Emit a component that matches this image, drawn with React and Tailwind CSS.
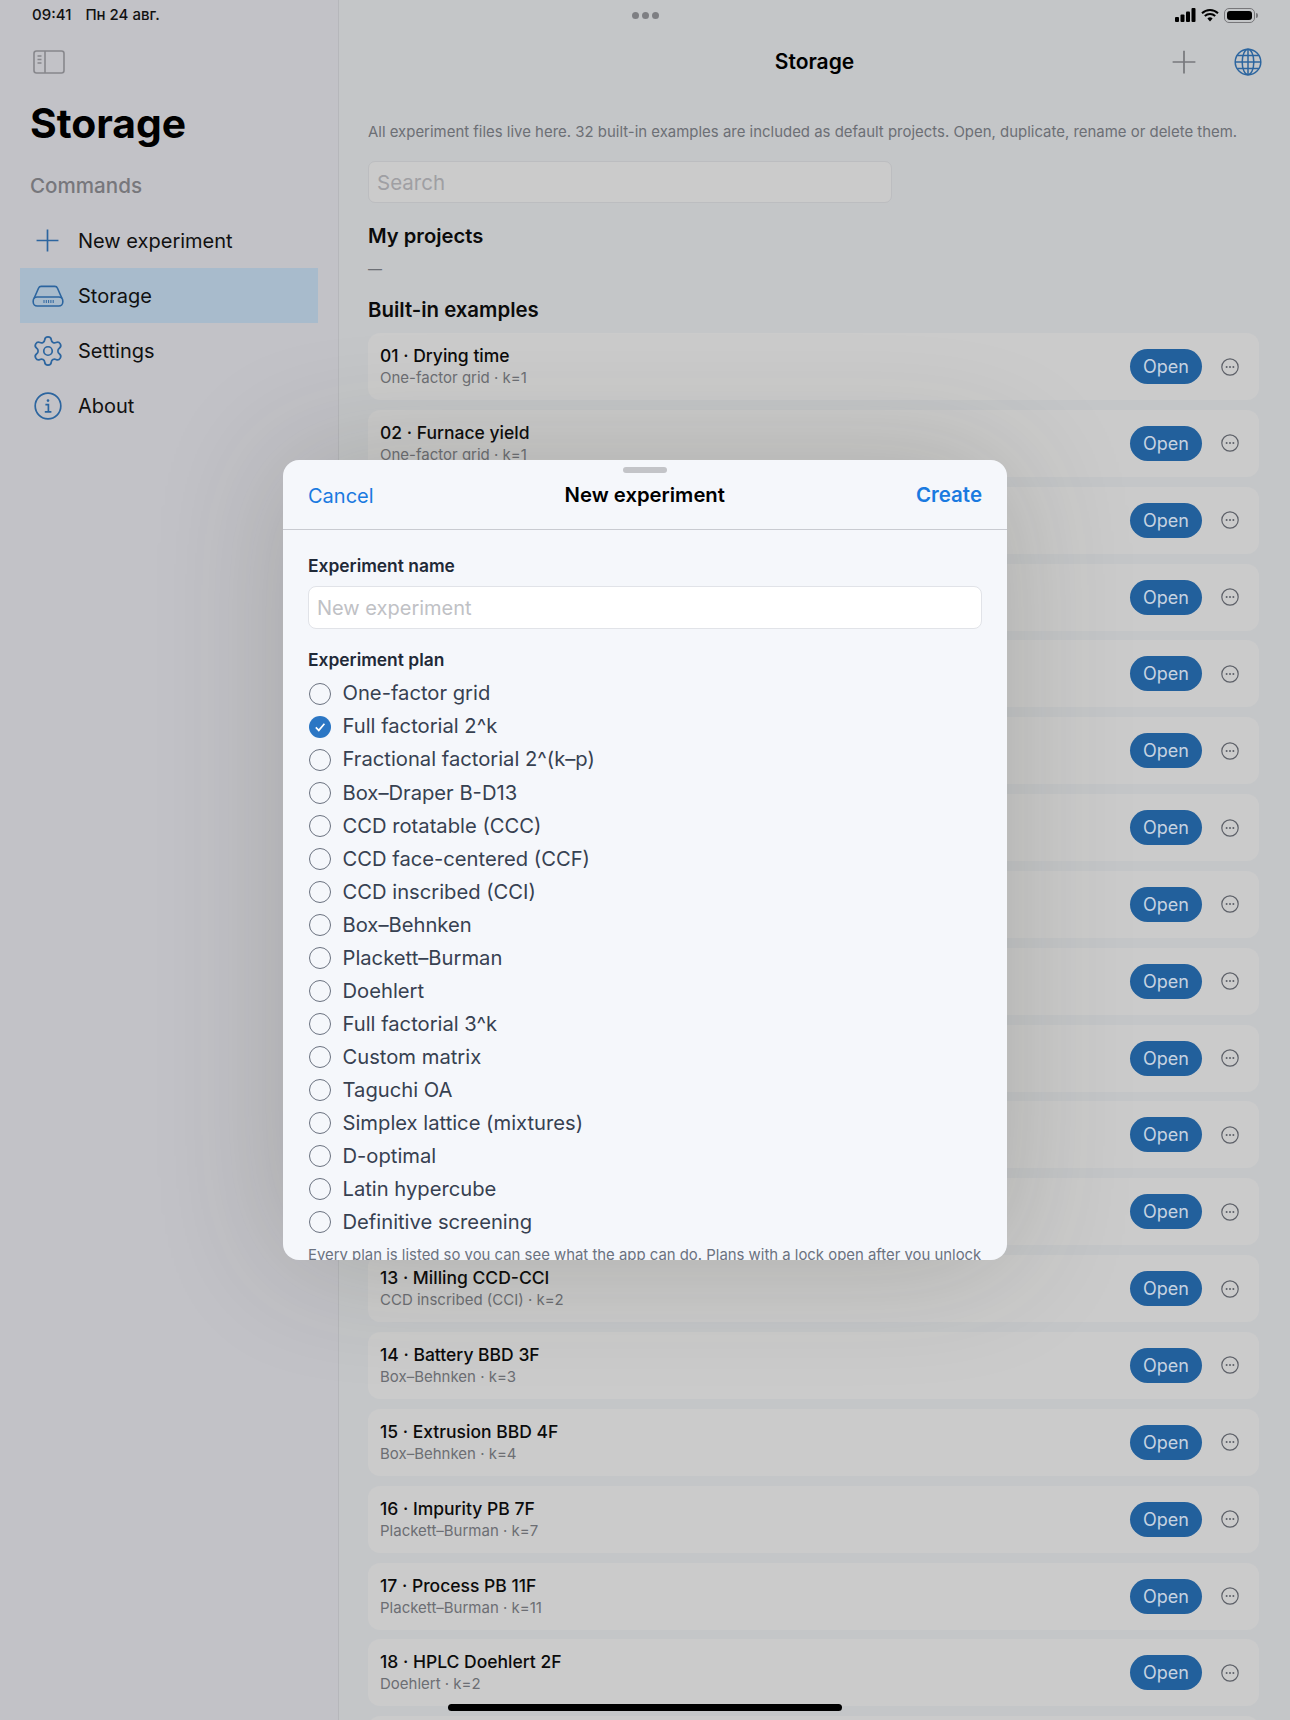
import React from 'react';
import { Settings } from 'lucide-react';

const examples = [
  ['01 · Drying time', 'One-factor grid · k=1'],
  ['02 · Furnace yield', 'One-factor grid · k=1'],
  ['03 · Coating 2F', 'Full factorial 2^k · k=2'],
  ['04 · Catalyst 3F', 'Full factorial 2^k · k=3'],
  ['05 · Extraction 4F', 'Full factorial 2^k · k=4'],
  ['06 · Screening 5F', 'Fractional factorial 2^(k–p) · k=5'],
  ['07 · Screening 6F', 'Fractional factorial 2^(k–p) · k=6'],
  ['08 · Alloy B-D13', 'Box–Draper B-D13 · k=3'],
  ['09 · Reactor CCD', 'CCD rotatable (CCC) · k=2'],
  ['10 · Polymer CCD', 'CCD rotatable (CCC) · k=3'],
  ['11 · Mixing CCF', 'CCD face-centered (CCF) · k=2'],
  ['12 · Drying CCF', 'CCD face-centered (CCF) · k=3'],
  ['13 · Milling CCD-CCI', 'CCD inscribed (CCI) · k=2'],
  ['14 · Battery BBD 3F', 'Box–Behnken · k=3'],
  ['15 · Extrusion BBD 4F', 'Box–Behnken · k=4'],
  ['16 · Impurity PB 7F', 'Plackett–Burman · k=7'],
  ['17 · Process PB 11F', 'Plackett–Burman · k=11'],
  ['18 · HPLC Doehlert 2F', 'Doehlert · k=2'],
];

const plans = [
  'One-factor grid',
  'Full factorial 2^k',
  'Fractional factorial 2^(k–p)',
  'Box–Draper B-D13',
  'CCD rotatable (CCC)',
  'CCD face-centered (CCF)',
  'CCD inscribed (CCI)',
  'Box–Behnken',
  'Plackett–Burman',
  'Doehlert',
  'Full factorial 3^k',
  'Custom matrix',
  'Taguchi OA',
  'Simplex lattice (mixtures)',
  'D-optimal',
  'Latin hypercube',
  'Definitive screening',
];

function PlusIcon({ className }) {
  return (
    <svg viewBox="0 0 24 24" className={className} fill="none" stroke="currentColor" strokeWidth="1.6">
      <path d="M12 1.5v21M1.5 12h21" />
    </svg>
  );
}

function DriveIcon() {
  return (
    <svg viewBox="0 0 32 24" className="h-[24px] w-[32px] text-[#2c659f]" fill="none" stroke="currentColor" strokeWidth="1.6">
      <path d="M2 14.5 6.5 4.2C7 3 8 2.4 9.2 2.4h13.6c1.2 0 2.2.6 2.7 1.8L30 14.5" />
      <rect x="1.2" y="13" width="29.6" height="9" rx="4" />
      <path d="M12 16v3M14.3 16v3M16.6 16v3M18.9 16v3M21.2 16v3" strokeWidth="1" />
    </svg>
  );
}

function InfoIcon() {
  return (
    <svg viewBox="0 0 28 28" className="h-[28px] w-[28px] text-[#2c659f]" fill="none" stroke="currentColor" strokeWidth="1.7">
      <circle cx="14" cy="14" r="12.8" />
      <circle cx="14" cy="8.6" r="1.3" fill="currentColor" stroke="none" />
      <path d="M11.4 12.6H14.4V19.6M10.8 19.8h6.6" />
    </svg>
  );
}

function PanelIcon() {
  return (
    <svg viewBox="0 0 32 24" className="h-[24px] w-[32px] text-[#87878c]" fill="none" stroke="currentColor" strokeWidth="1.6">
      <rect x="1" y="1" width="30" height="22" rx="2.5" />
      <path d="M12 1v22" />
      <path d="M4.5 6h4M4.5 9.5h4M4.5 13h4" />
    </svg>
  );
}

function GlobeIcon() {
  return (
    <svg viewBox="0 0 28 28" className="h-[28px] w-[28px] text-[#2c659f]" fill="none" stroke="currentColor" strokeWidth="1.5">
      <circle cx="14" cy="14" r="12.8" />
      <ellipse cx="14" cy="14" rx="5.8" ry="12.8" />
      <path d="M14 1.2v25.6M1.2 14h25.6M3.2 7.6h21.6M3.2 20.4h21.6" />
    </svg>
  );
}

function MoreIcon() {
  return (
    <svg viewBox="0 0 18 18" className="h-[18px] w-[18px] text-[#5d6068]" fill="none" stroke="currentColor" strokeWidth="1.2">
      <circle cx="9" cy="9" r="8.2" />
      <circle cx="5.6" cy="9" r="1" fill="currentColor" stroke="none" />
      <circle cx="9" cy="9" r="1" fill="currentColor" stroke="none" />
      <circle cx="12.4" cy="9" r="1" fill="currentColor" stroke="none" />
    </svg>
  );
}

function StatusIcons() {
  return (
    <div className="flex items-center gap-[5px]">
      <svg viewBox="0 0 21 14" className="h-[14px] w-[21px] fill-black">
        <rect x="0" y="9" width="4" height="5" rx="1" />
        <rect x="5.5" y="6.5" width="4" height="7.5" rx="1" />
        <rect x="11" y="3.5" width="4" height="10.5" rx="1" />
        <rect x="16.5" y="0" width="4" height="14" rx="1" />
      </svg>
      <svg viewBox="0 0 18 14" className="h-[14px] w-[18px]" fill="none" stroke="#000" strokeWidth="2">
        <path d="M1 5.2a11.5 11.5 0 0 1 16 0M3.8 8a7.5 7.5 0 0 1 10.4 0" />
        <path d="M9 13.4 6.4 10.6a3.7 3.7 0 0 1 5.2 0Z" fill="#000" stroke="none" />
      </svg>
      <div className="flex items-center gap-[1px]">
        <div className="h-[15px] w-[31px] rounded-[5px] border border-[#77777a] p-[2px]">
          <div className="h-full w-full rounded-[3px] bg-black" />
        </div>
        <div className="h-[5px] w-[2px] rounded-r-sm bg-[#77777a]" />
      </div>
    </div>
  );
}

function NavRow({ icon, label, active }) {
  return (
    <div className={`flex h-[55px] items-center ${active ? 'bg-[#a8bbcc]' : ''}`}>
      <div className="flex w-[58px] shrink-0 justify-center pr-[3px]">{icon}</div>
      <span className="text-[20px] text-[#111]">{label}</span>
    </div>
  );
}

function ExampleCard({ title, subtitle }) {
  return (
    <div className="flex h-[67px] shrink-0 items-center rounded-[12px] bg-[#cbcbcb] pl-[12px] pr-[20px]">
      <div className="flex-1 pb-[1px]">
        <div className="text-[17.5px] leading-[24px] font-medium text-[#0b0b0b]">{title}</div>
        <div className="text-[15px] leading-[20px] text-[#6c6e73]">{subtitle}</div>
      </div>
      <div className="flex h-[35px] w-[72px] items-center justify-center rounded-[17.5px] bg-[#22609c] text-[18px] text-[#c6d3e1]">
        Open
      </div>
      <div className="ml-[19px]">
        <MoreIcon />
      </div>
    </div>
  );
}

function PlanRow({ label, checked }) {
  return (
    <div className="flex h-[33.06px] items-center">
      {checked ? (
        <svg viewBox="0 0 22 22" className="ml-[1px] h-[22px] w-[22px] shrink-0">
          <circle cx="11" cy="11" r="11" fill="#2b76c4" />
          <path d="M6.8 11.4 9.8 14.4 15.4 7.8" fill="none" stroke="#fff" strokeWidth="1.7" />
        </svg>
      ) : (
        <div className="ml-[1px] h-[22px] w-[22px] shrink-0 rounded-full border-[1.8px] border-[#6b7280]" />
      )}
      <span className="ml-[11.5px] text-[20.2px] text-[#374151]">{label}</span>
    </div>
  );
}

function NewExperimentSheet() {
  return (
    <div className="absolute left-[283px] top-[460px] h-[800px] w-[724px] overflow-hidden rounded-[16px] bg-[#f5f7fb] shadow-[0_0_130px_rgba(50,50,35,0.2)]">
      <div className="mx-auto mt-[7px] h-[6px] w-[44px] rounded-full bg-[#c3c4c8]" />
      <div className="flex h-[57px] items-center justify-between border-b border-[#c9cbd1] px-[25px] pb-[11px]">
        <span className="text-[20px] text-[#1a7ae0]">Cancel</span>
        <span className="text-[20.3px] font-semibold text-black">New experiment</span>
        <span className="text-[20.5px] font-semibold text-[#1a7ae0]">Create</span>
      </div>
      <div className="px-[25px]">
        <div className="mt-[24px] text-[17.4px] leading-[24px] font-semibold text-[#1f2937]">Experiment name</div>
        <input
          readOnly
          placeholder="New experiment"
          className="mt-[8px] h-[43px] w-full rounded-[8px] border border-[#e1e3e8] bg-white px-[8px] text-[20px] placeholder:text-[#c0c1c5]"
        />
        <div className="mt-[19px] text-[17.4px] leading-[24px] font-semibold text-[#1f2937]">Experiment plan</div>
        <div className="mt-[5px]">
          {plans.map((p, i) => (
            <PlanRow key={p} label={p} checked={i === 1} />
          ))}
        </div>
        <p className="mt-[6px] text-[14.9px] leading-[20px] text-[#6b7280]">
          Every plan is listed so you can see what the app can do. Plans with a lock open after you unlock the full version.
        </p>
      </div>
    </div>
  );
}

export default function App() {
  return (
    <div className="relative flex h-[1720px] w-[1290px] overflow-hidden bg-[#c4c6c8] font-['Inter',sans-serif]">
      {/* status bar sits over both columns */}
      <div className="absolute inset-x-0 top-0 flex h-[30px] items-center justify-between pl-[32px] pr-[32px]">
        <div className="flex gap-[14px] text-[15px] font-medium text-[#111]">
          <span>09:41</span>
          <span>Пн 24 авг.</span>
        </div>
        <StatusIcons />
      </div>
      <div className="absolute left-[632px] top-[12px] flex gap-[3px]">
        <div className="h-[7px] w-[7px] rounded-full bg-[#7e7f83]" />
        <div className="h-[7px] w-[7px] rounded-full bg-[#7e7f83]" />
        <div className="h-[7px] w-[7px] rounded-full bg-[#7e7f83]" />
      </div>

      <aside className="w-[339px] shrink-0 border-r border-[#b6b7bb] bg-[#c2c2c7] pt-[50px]">
        <div className="pl-[33px]">
          <PanelIcon />
        </div>
        <h1 className="mt-[21px] pl-[30px] text-[40.8px] leading-[56px] font-bold text-black">Storage</h1>
        <div className="mt-[21px] pl-[30px] text-[20.6px] leading-[28px] font-medium text-[#77777c]">Commands</div>
        <nav className="ml-[20px] mt-[13px] w-[298px]">
          <NavRow icon={<PlusIcon className="h-[25px] w-[25px] text-[#2c659f]" />} label="New experiment" />
          <NavRow icon={<DriveIcon />} label="Storage" active />
          <NavRow icon={<Settings className="h-[34px] w-[34px] text-[#2c659f]" strokeWidth={1.2} />} label="Settings" />
          <NavRow icon={<InfoIcon />} label="About" />
        </nav>
      </aside>

      <main className="min-w-0 flex-1 pt-[44px]">
        <div className="grid h-[36px] grid-cols-[1fr_auto_1fr] items-center">
          <div />
          <div className="text-[21px] font-semibold text-black">Storage</div>
          <div className="flex items-center justify-end gap-[37px] pr-[28px]">
            <PlusIcon className="h-[26px] w-[26px] text-[#77787c]" />
            <GlobeIcon />
          </div>
        </div>
        <div className="pl-[29px] pr-[31px]">
          <p className="mt-[40px] whitespace-nowrap text-[14.95px] leading-[24px] text-[#6c6f75]">
            All experiment files live here. 32 built-in examples are included as default projects. Open, duplicate, rename or delete them.
          </p>
          <input
            readOnly
            placeholder="Search"
            className="mt-[17px] h-[42px] w-[524px] rounded-[7px] border border-[#bcbdc0] bg-[#cbcbcb] px-[8px] text-[20.5px] placeholder:text-[#9f9fa3]"
          />
          <h2 className="mt-[19px] text-[20.2px] leading-[28px] font-semibold text-[#0b0b0b]">My projects</h2>
          <div className="mt-[5px] h-[28px] text-[14px] leading-[28px] text-[#6c6f75]">—</div>
          <h2 className="mt-[13px] text-[20.4px] leading-[28px] font-semibold text-[#0b0b0b]">Built-in examples</h2>
          <div className="mt-[9px] flex flex-col gap-[9.85px]">
            {examples.map(([title, subtitle]) => (
              <ExampleCard key={title} title={title} subtitle={subtitle} />
            ))}
            <div className="h-[67px] shrink-0 rounded-[12px] bg-[#cbcbcb]" />
          </div>
        </div>
      </main>

      <NewExperimentSheet />
      <div className="absolute bottom-[9px] left-[448px] h-[7px] w-[394px] rounded-full bg-black" />
    </div>
  );
}
